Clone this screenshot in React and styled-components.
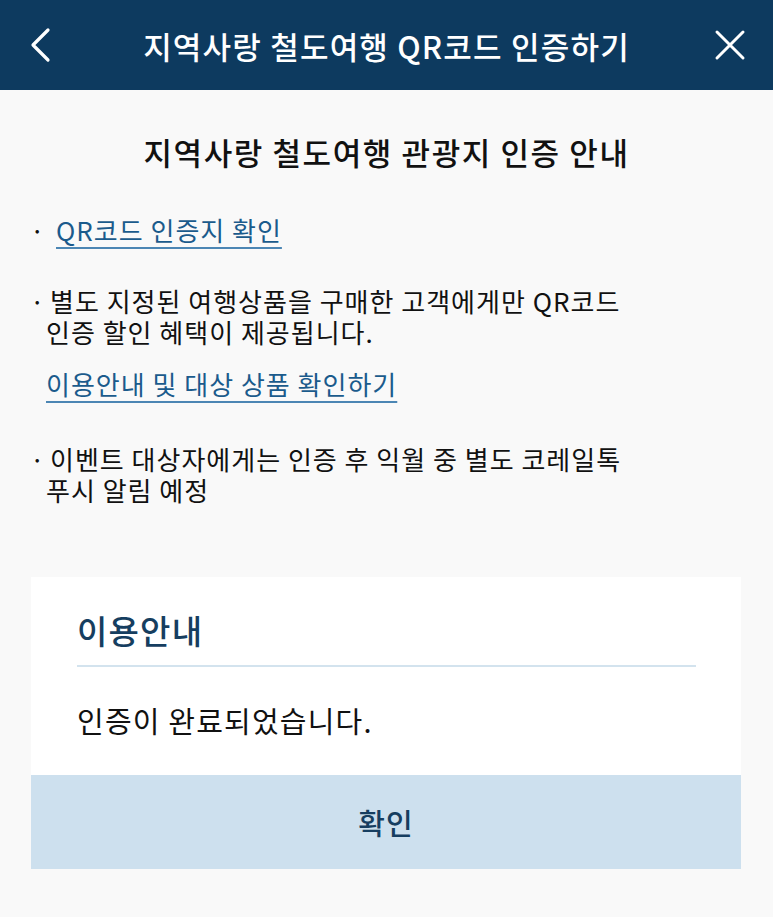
import React from "react";
import styled, { createGlobalStyle } from "styled-components";

const Global = createGlobalStyle`
  html, body { margin: 0; padding: 0; background: #f9f9f9; }
  body { font-family: "Noto Sans CJK KR", "Noto Sans", sans-serif; -webkit-font-smoothing: antialiased; }
  * { box-sizing: border-box; }
`;

const Page = styled.div`
  width: 773px;
  height: 917px;
  background: #f9f9f9;
  display: flex;
  flex-direction: column;
  overflow: hidden;
`;

const Header = styled.header`
  height: 90px;
  flex: none;
  background: #0d3a5f;
  display: grid;
  grid-template-columns: 80px 1fr 80px;
  align-items: center;
`;

const IconButton = styled.button`
  background: none;
  border: 0;
  padding: 0;
  height: 90px;
  display: flex;
  align-items: center;
  justify-content: ${(p) => (p.$right ? "flex-end" : "flex-start")};
  padding-left: ${(p) => (p.$right ? "0" : "30px")};
  padding-right: ${(p) => (p.$right ? "27px" : "0")};
  cursor: pointer;
`;

const Title = styled.h1`
  margin: 0;
  color: #fff;
  font-size: 31px;
  font-weight: 500;
  text-align: center;
  letter-spacing: 1.2px;
  white-space: nowrap;
`;

const Content = styled.main`
  display: flex;
  flex-direction: column;
`;

const Heading = styled.h2`
  margin: 0;
  padding-top: 42px;
  text-align: center;
  font-size: 31px;
  font-weight: 500;
  color: #111;
  line-height: 40px;
  letter-spacing: 1.6px;
  white-space: nowrap;
`;

const List = styled.ul`
  list-style: none;
  margin: 0;
  padding: 0 118px 0 46px;
  display: flex;
  flex-direction: column;
`;

const Item = styled.li`
  font-size: 26px;
  line-height: 31px;
  color: #111;
  text-indent: -16px;
  margin-top: ${(p) => p.$mt}px;
  letter-spacing: 1px;
  word-break: keep-all;
`;

const Dot = styled.span`
  display: inline-block;
  width: ${(p) => p.$w || 20}px;
  text-indent: 0;
  letter-spacing: 0;
`;

const Link = styled.a`
  color: #1b5b8c;
  text-decoration: underline;
  text-decoration-color: #4c86b4;
  text-decoration-thickness: 2px;
  text-underline-offset: 6px;
`;

const SubLink = styled.p`
  margin: 21px 0 0 0;
  text-indent: 0;
`;

const Dialog = styled.section`
  margin: 72px 32px 0 31px;
  background: #fff;
  display: flex;
  flex-direction: column;
`;

const DialogBody = styled.div`
  padding: 0 45px 0 46px;
`;

const DialogTitle = styled.h3`
  margin: 0;
  padding: 32px 0 14px;
  font-size: 33px;
  font-weight: 500;
  line-height: 42px;
  color: #163e60;
  border-bottom: 2px solid #d3e3ee;
  letter-spacing: 1.2px;
`;

const Message = styled.p`
  margin: 0;
  padding: 33px 0 0;
  height: 108px;
  font-size: 29px;
  line-height: 40px;
  color: #111;
  letter-spacing: 1.2px;
`;

const ConfirmButton = styled.button`
  height: 94px;
  border: 0;
  background: #cde0ee;
  color: #163e60;
  font-family: inherit;
  font-size: 29px;
  font-weight: 500;
  letter-spacing: 1px;
  cursor: pointer;
`;

export default function App() {
  return (
    <>
      <Global />
      <Page>
        <Header>
          <IconButton aria-label="뒤로">
            <svg width="22" height="36" viewBox="0 0 22 36">
              <path d="M18 3 L3 18 L18 33" fill="none" stroke="#fff" strokeWidth="3.2" strokeLinecap="round" strokeLinejoin="round" />
            </svg>
          </IconButton>
          <Title>지역사랑 철도여행 QR코드 인증하기</Title>
          <IconButton $right aria-label="닫기">
            <svg width="32" height="32" viewBox="0 0 32 32">
              <path d="M3 3 L29 29 M29 3 L3 29" fill="none" stroke="#fff" strokeWidth="3" strokeLinecap="round" />
            </svg>
          </IconButton>
        </Header>
        <Content>
          <Heading>지역사랑 철도여행 관광지 인증 안내</Heading>
          <List>
            <Item $mt={42}>
              <Dot $w={26}>·</Dot>
              <Link href="#">QR코드 인증지 확인</Link>
            </Item>
            <Item $mt={40}>
              <Dot>·</Dot>별도 지정된 여행상품을 구매한 고객에게만 QR코드 인증 할인 혜택이 제공됩니다.
              <SubLink>
                <Link href="#">이용안내 및 대상 상품 확인하기</Link>
              </SubLink>
            </Item>
            <Item $mt={44}>
              <Dot>·</Dot>이벤트 대상자에게는 인증 후 익월 중 별도 코레일톡 푸시 알림 예정
            </Item>
          </List>
          <Dialog>
            <DialogBody>
              <DialogTitle>이용안내</DialogTitle>
              <Message>인증이 완료되었습니다.</Message>
            </DialogBody>
            <ConfirmButton>확인</ConfirmButton>
          </Dialog>
        </Content>
      </Page>
    </>
  );
}
